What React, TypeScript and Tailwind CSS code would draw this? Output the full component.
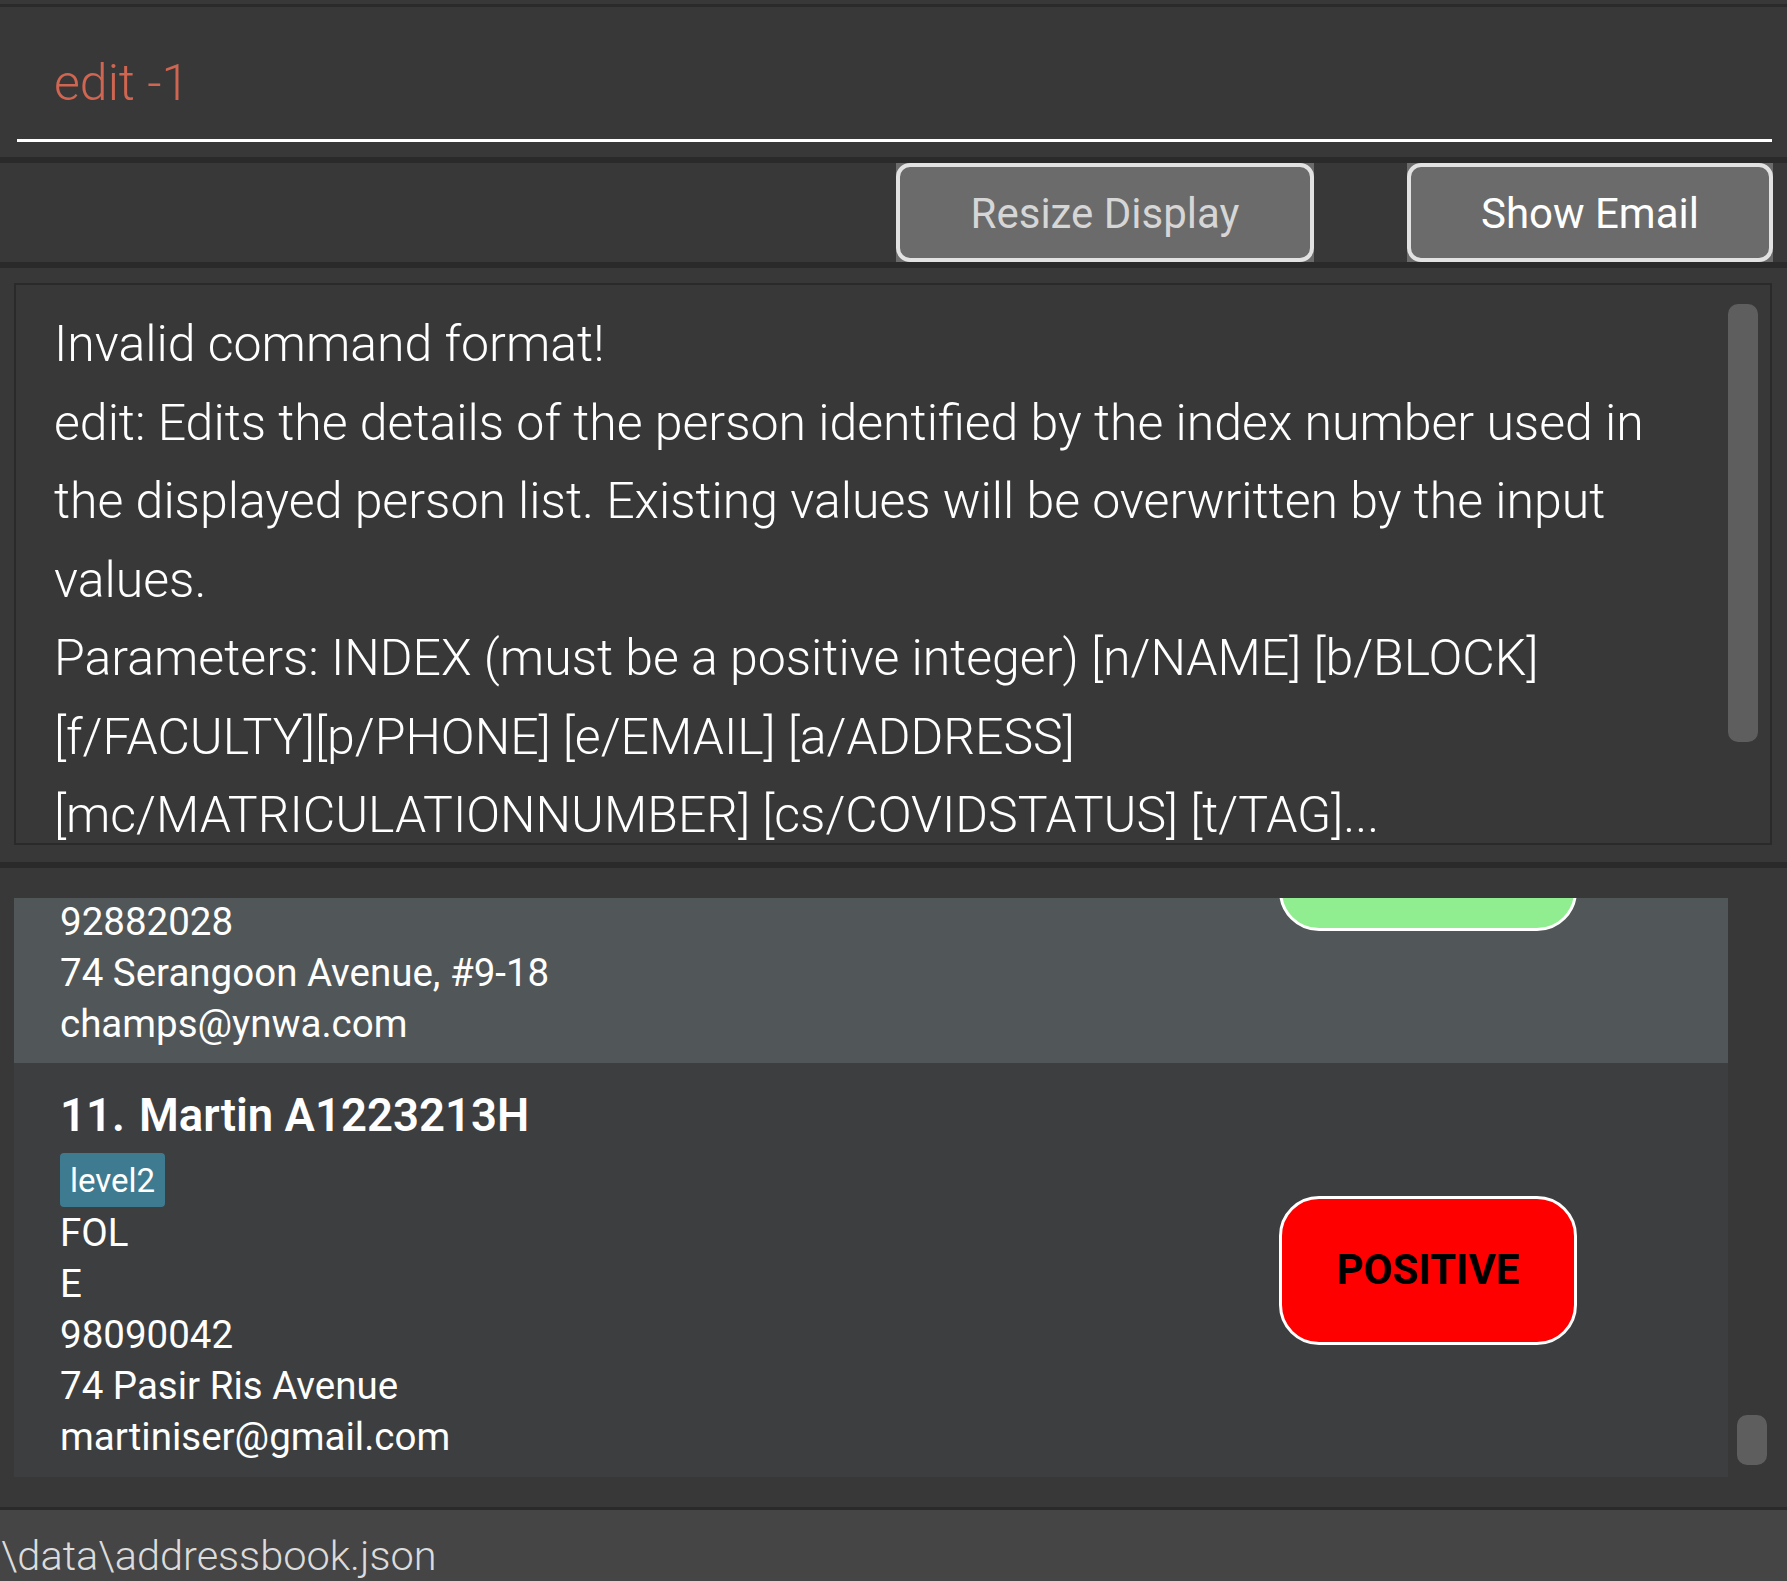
const resultLines = [
  'Invalid command format!',
  'edit: Edits the details of the person identified by the index number used in',
  'the displayed person list. Existing values will be overwritten by the input',
  'values.',
  'Parameters: INDEX (must be a positive integer) [n/NAME] [b/BLOCK]',
  '[f/FACULTY][p/PHONE] [e/EMAIL] [a/ADDRESS]',
  '[mc/MATRICULATIONNUMBER] [cs/COVIDSTATUS] [t/TAG]...',
];

function Btn({ label, width, color }: { label: string; width: string; color: string }) {
  return (
    <div className={`h-full bg-[#6b6b6b] ${width}`}>
      <div
        className={`h-full border-[4px] border-[#e2e2e2] rounded-[14px] flex items-center justify-center pt-[3px] text-[42px] leading-none ${color}`}
      >
        {label}
      </div>
    </div>
  );
}

export default function App() {
  return (
    <div className="w-[1787px] h-[1581px] overflow-hidden bg-[#383838] flex flex-col font-['Roboto',sans-serif]">
      <div className="h-[4px] shrink-0" />
      <div className="h-[3px] shrink-0 bg-[#2a2a2a]" />
      {/* command box */}
      <div className="h-[150px] shrink-0 pl-[17px] pr-[15px]">
        <div className="h-[135px] border-b-[3px] border-white pl-[37px] pt-[51px]">
          <div className="text-[50px] leading-none font-light text-[#d06651]">edit -1</div>
        </div>
      </div>
      <div className="h-[6px] shrink-0 bg-[#2a2a2a]" />
      {/* buttons */}
      <div className="h-[99px] shrink-0 flex justify-end pr-[14px] gap-[93px]">
        <Btn label="Resize Display" width="w-[418px]" color="text-[#d6d6d6]" />
        <Btn label="Show Email" width="w-[366px]" color="text-white" />
      </div>
      <div className="h-[6px] shrink-0 bg-[#2a2a2a]" />
      {/* result display */}
      <div className="h-[594px] shrink-0 pt-[15px] pl-[14px] pr-[15px]">
        <div className="h-[562px] border-2 border-[#2a2a2a] flex overflow-hidden">
          <div className="flex-1 min-w-0 pl-[38px] pt-[20px] text-white font-light text-[50px] leading-[78.5px] whitespace-nowrap">
            {resultLines.map((l) => (
              <div key={l}>{l}</div>
            ))}
          </div>
          <div className="w-[42px] shrink-0 pt-[19px]">
            <div className="w-[30px] h-[438px] rounded-[10px] bg-[#5e5e5e]" />
          </div>
        </div>
      </div>
      <div className="h-[6px] shrink-0 bg-[#2a2a2a]" />
      {/* person list */}
      <div className="h-[639px] shrink-0 flex pl-[14px]">
        <div className="w-[1714px] mt-[30px] h-[579px] overflow-hidden">
          <div className="-mt-[249px] text-white">
            {/* card 10 (partially scrolled out of view) */}
            <div className="h-[414px] flex bg-[#515658]">
              <div className="flex-1 pl-[46px] flex flex-col text-[38.5px] leading-[51px]">
                <div className="h-[247px]" />
                <div>92882028</div>
                <div>74 Serangoon Avenue, #9-18</div>
                <div>champs@ynwa.com</div>
              </div>
              <div className="w-[600px] flex items-center justify-center">
                <div className="w-[298px] h-[149px] rounded-[40px] border-[3px] border-white bg-[#90ee90]" />
              </div>
            </div>
            {/* card 11 */}
            <div className="h-[414px] flex bg-[#3c3e3f]">
              <div className="flex-1 pl-[46px] pt-[23px] flex flex-col text-[38.5px] leading-[51px]">
                <div className="flex h-[60px] items-center text-[45.5px] font-semibold leading-[60px]">
                  <span className="w-[79px]">11.</span>
                  <span>Martin A1223213H</span>
                </div>
                <div className="mt-[7px] flex">
                  <div className="h-[54px] px-[10px] rounded-[4px] bg-[#3e7b91] flex items-center text-[33px] leading-none">
                    level2
                  </div>
                </div>
                <div>FOL</div>
                <div>E</div>
                <div>98090042</div>
                <div>74 Pasir Ris Avenue</div>
                <div>martiniser@gmail.com</div>
              </div>
              <div className="w-[600px] flex items-center justify-center">
                <div className="w-[298px] h-[149px] rounded-[40px] border-[3px] border-white bg-[#ff0000] flex items-center justify-center text-black font-bold text-[42px] leading-none">
                  POSITIVE
                </div>
              </div>
            </div>
          </div>
        </div>
        <div className="flex-1 pl-[9px] pt-[547px]">
          <div className="w-[30px] h-[50px] rounded-[10px] bg-[#5e5e5e]" />
        </div>
      </div>
      <div className="h-[3px] shrink-0 bg-[#2a2a2a]" />
      {/* status bar */}
      <div className="h-[71px] shrink-0 bg-[#454545] overflow-hidden pl-[1px] pt-[25px]">
        <div className="text-[41.5px] leading-none font-light text-[#dcdcdc] whitespace-nowrap">
          \data\addressbook.json
        </div>
      </div>
    </div>
  );
}
